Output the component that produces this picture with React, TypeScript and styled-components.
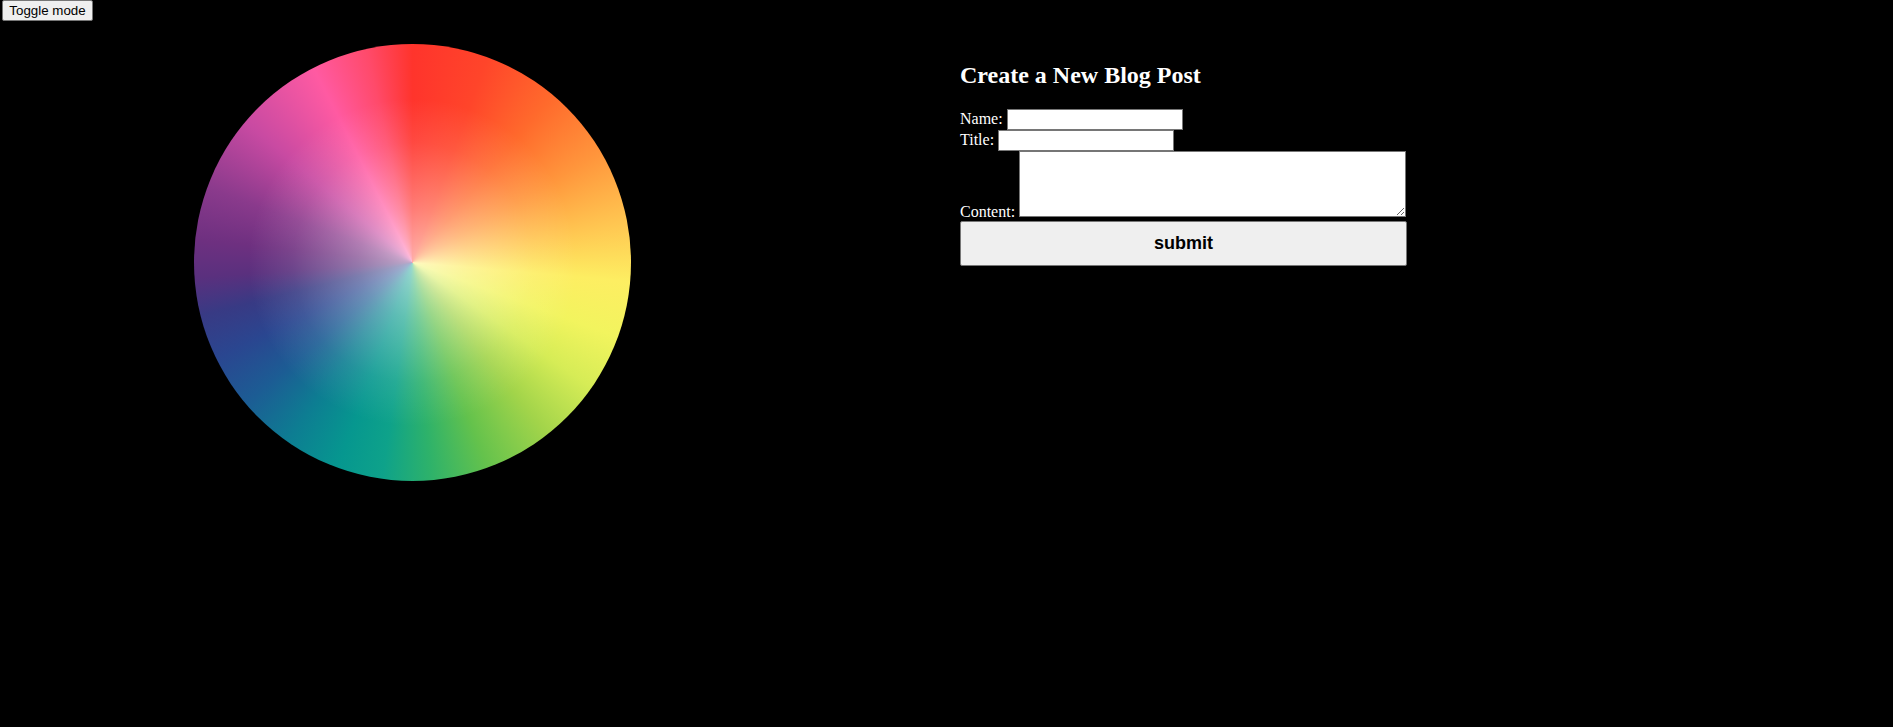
import React, { useState } from "react";
import styled, { createGlobalStyle } from "styled-components";

const GlobalStyle = createGlobalStyle<{ $dark: boolean }>`
  html, body {
    margin: 0;
    padding: 0;
    background: ${(p) => (p.$dark ? "#000000" : "#ffffff")};
    color: ${(p) => (p.$dark ? "#ffffff" : "#000000")};
    font-family: "Liberation Serif", "Times New Roman", serif;
    font-size: 16px;
  }
  #root { min-height: 727px; }
`;

const ToggleButton = styled.button`
  display: block;
  box-sizing: border-box;
  margin: 0 0 0 2px;
  width: 91px;
  height: 21px;
  padding: 1px 6px;
  font-family: "Liberation Sans", Arial, sans-serif;
  font-size: 13.33px;
  color: #000;
  background: #efefef;
  border: 1px solid #767676;
  border-radius: 2px;
  cursor: pointer;
`;

const Main = styled.main`
  display: flex;
  align-items: flex-start;
`;

const WheelPane = styled.section`
  flex: 0 0 960px;
  box-sizing: border-box;
  padding: 23px 0 0 194px;
`;

const Wheel = styled.div`
  width: 437px;
  height: 437px;
  border-radius: 50%;
  background:
    radial-gradient(
      circle closest-side,
      rgba(255, 255, 255, 0.6) 0%,
      rgba(255, 255, 255, 0.35) 25%,
      rgba(255, 255, 255, 0.1) 55%,
      rgba(255, 255, 255, 0) 75%
    ),
    conic-gradient(
      from 0deg,
      #ff342c 0deg,
      #ff452a 20deg,
      #ff6a2c 40deg,
      #ff963c 60deg,
      #ffc852 80deg,
      #fdee62 95deg,
      #f2f45e 110deg,
      #d6ec56 125deg,
      #a2d44a 142deg,
      #64c24c 160deg,
      #2eb26a 175deg,
      #0ea28a 188deg,
      #06978f 200deg,
      #0d7d92 215deg,
      #1c5c94 230deg,
      #2a4690 244deg,
      #383a84 256deg,
      #5a307e 266deg,
      #6e3080 276deg,
      #8a3a8c 290deg,
      #c84aa2 310deg,
      #ff5aa2 333deg,
      #ff4a6a 348deg,
      #ff342c 360deg
    );
`;

const FormPane = styled.section`
  flex: 0 0 auto;
`;

const Heading = styled.h2`
  margin: 41px 0 20px;
  font-size: 24px;
  font-weight: bold;
  line-height: normal;
`;

const Form = styled.form`
  width: 447px;
  line-height: normal;
`;

const FieldLabel = styled.label`
  white-space: nowrap;
`;

const TextInput = styled.input`
  box-sizing: border-box;
  width: 176px;
  height: 21px;
  padding: 1px 2px;
  margin: 0;
  border: 1px solid #767676;
  background: #ffffff;
  font-family: "Liberation Sans", Arial, sans-serif;
  font-size: 13.33px;
  vertical-align: baseline;
`;

const ContentArea = styled.textarea`
  box-sizing: border-box;
  width: 387px;
  height: 66px;
  padding: 2px;
  margin: 0;
  border: 1px solid #767676;
  background: #ffffff;
  font-family: "Liberation Mono", monospace;
  font-size: 13.33px;
  vertical-align: baseline;
  resize: both;
`;

const SubmitButton = styled.button`
  display: block;
  box-sizing: border-box;
  width: 447px;
  height: 45px;
  margin: 0;
  padding: 0;
  font-family: "Liberation Sans", Arial, sans-serif;
  font-size: 18px;
  font-weight: bold;
  color: #000;
  background: #efefef;
  border: 1px solid #767676;
  border-radius: 2px;
  cursor: pointer;
`;

export default function App() {
  const [dark, setDark] = useState(true);
  return (
    <>
      <GlobalStyle $dark={dark} />
      <ToggleButton type="button" onClick={() => setDark((d) => !d)}>
        Toggle mode
      </ToggleButton>
      <Main>
        <WheelPane>
          <Wheel />
        </WheelPane>
        <FormPane>
          <Heading>Create a New Blog Post</Heading>
          <Form onSubmit={(e) => e.preventDefault()}>
            <FieldLabel>
              Name: <TextInput type="text" name="name" />
            </FieldLabel>
            <br />
            <FieldLabel>
              Title: <TextInput type="text" name="title" />
            </FieldLabel>
            <br />
            <FieldLabel>
              Content: <ContentArea name="content" />
            </FieldLabel>
            <br />
            <SubmitButton type="submit">submit</SubmitButton>
          </Form>
        </FormPane>
      </Main>
    </>
  );
}
